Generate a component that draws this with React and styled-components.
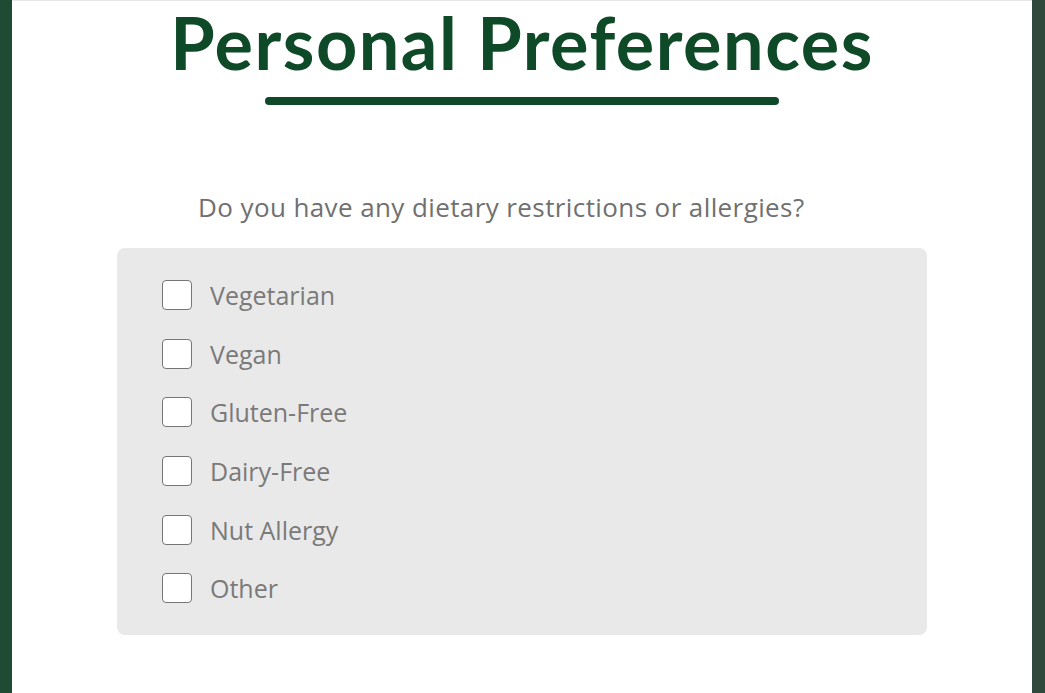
import React from "react";
import styled, { createGlobalStyle } from "styled-components";

const options = [
  "Vegetarian",
  "Vegan",
  "Gluten-Free",
  "Dairy-Free",
  "Nut Allergy",
  "Other",
];

function App() {
  return (
    <>
      <GlobalStyle />
      <Page>
        <Card>
          <Heading>Personal Preferences</Heading>
          <Question>Do you have any dietary restrictions or allergies?</Question>
          <OptionBox>
            {options.map((name) => (
              <Option key={name}>
                <Box type="checkbox" />
                <Label>{name}</Label>
              </Option>
            ))}
          </OptionBox>
        </Card>
      </Page>
    </>
  );
}

export default App;

const GlobalStyle = createGlobalStyle`
  html, body {
    margin: 0;
    padding: 0;
  }
  body {
    font-family: "Open Sans", "Noto Sans", sans-serif;
    background: #fff;
  }
`;

const Page = styled.div`
  display: flex;
  min-height: 693px;
  padding: 0 13px 0 12px;
  background: linear-gradient(90deg, #1f4a33 0%, #2a4a3a 50%, #30493d 100%);
`;

const Card = styled.div`
  flex: 1;
  display: flex;
  flex-direction: column;
  align-items: center;
  background: #fff;
  border-top: 1px solid #e6e6e6;
`;

// HEADING STYLING
const Heading = styled.h1`
  position: relative;
  margin: 0;
  font-family: "Lato", "Open Sans", sans-serif;
  font-size: 72px;
  font-weight: 700;
  letter-spacing: 1.5px;
  line-height: 82px;
  color: #0e4a27;
  &:after {
    content: "";
    position: absolute;
    left: 95px;
    right: 95px;
    bottom: -22px;
    height: 8px;
    border-radius: 4px;
    background: #0e4a27;
  }
`;

const Question = styled.p`
  align-self: stretch;
  margin: 106px 0 0;
  padding-left: 186px;
  font-size: 26px;
  letter-spacing: 0.4px;
  line-height: 36px;
  color: #707070;
`;

// OPTIONS STYLING
const OptionBox = styled.div`
  display: flex;
  flex-direction: column;
  gap: 28.7px;
  width: 810px;
  box-sizing: border-box;
  margin-top: 23px;
  padding: 32px 45px 32px;
  background: #e9e9e9;
  border-radius: 8px;
`;

const Option = styled.label`
  display: flex;
  align-items: center;
  gap: 18px;
  height: 30px;
`;

const Box = styled.input`
  appearance: none;
  margin: 0;
  width: 30px;
  height: 30px;
  box-sizing: border-box;
  border: 1.5px solid #767676;
  border-radius: 4px;
  background: #fff;
`;

const Label = styled.span`
  font-size: 25px;
  color: #7a7a7a;
`;
